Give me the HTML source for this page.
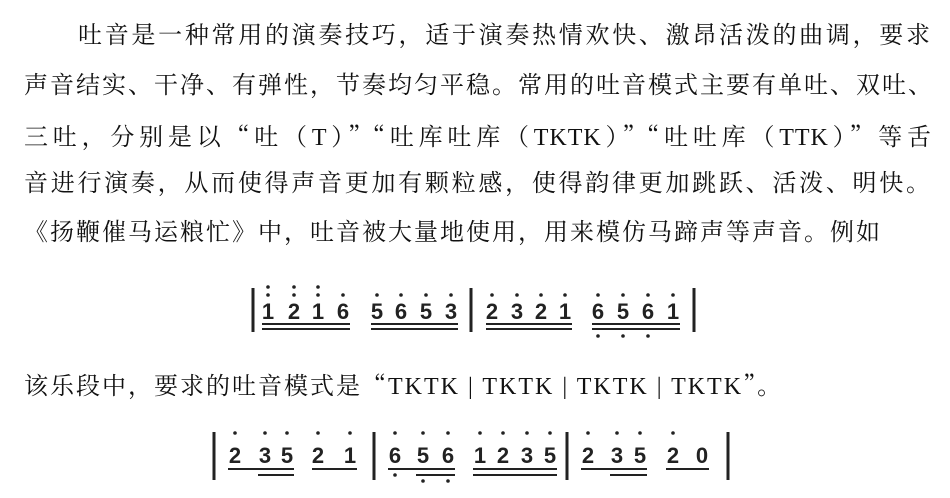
<!DOCTYPE html>
<html><head><meta charset="utf-8"><style>
body{margin:0;width:950px;height:498px;background:#fff;overflow:hidden;position:relative;font-family:"Liberation Serif","Noto Serif CJK SC",serif;color:#111}
.l{position:absolute;left:24px;width:908px;font-size:24px;line-height:30px;letter-spacing:2px;white-space:nowrap;text-align:justify;text-align-last:justify}
.n{text-align-last:auto}
.q{font-family:"Noto Serif CJK SC",serif}
svg{position:absolute;left:0;top:0}
svg text{font-family:"Liberation Sans",sans-serif;font-weight:bold;font-size:22px;text-anchor:middle}
</style></head><body>
<div class="l" style="top:21px;left:78px;width:854px">吐音是一种常用的演奏技巧，适于演奏热情欢快、激昂活泼的曲调，要求</div>
<div class="l" style="top:71px">声音结实、干净、有弹性，节奏均匀平稳。常用的吐音模式主要有单吐、双吐、</div>
<div class="l" style="top:120px;letter-spacing:1px">三吐，分别是以<span class="q">“</span>吐（T）<span class="q">”“</span>吐库吐库（TKTK）<span class="q">”“</span>吐吐库（TTK）<span class="q">”</span>等舌</div>
<div class="l" style="top:169px">音进行演奏，从而使得声音更加有颗粒感，使得韵律更加跳跃、活泼、明快。</div>
<div class="l n" style="top:218px">《扬鞭催马运粮忙》中，吐音被大量地使用，用来模仿马蹄声等声音。例如</div>
<div class="l n" style="top:369px">该乐段中，要求的吐音模式是<span class="q">“</span>TKTK | TKTK | TKTK | TKTK<span class="q">”</span>。</div>
<svg width="950" height="498" stroke="#222" fill="#222">
<g stroke-width="3"><line x1="253" y1="288" x2="253" y2="332"/><line x1="471" y1="288" x2="471" y2="332"/><line x1="694" y1="288" x2="694" y2="332"/></g>
<g stroke="none">
<text x="268" y="319">1</text><text x="294" y="319">2</text><text x="318" y="319">1</text><text x="343" y="319">6</text>
<text x="377" y="319">5</text><text x="401" y="319">6</text><text x="426" y="319">5</text><text x="451" y="319">3</text>
<text x="492" y="319">2</text><text x="517" y="319">3</text><text x="541" y="319">2</text><text x="565" y="319">1</text>
<text x="598" y="319">6</text><text x="623" y="319">5</text><text x="648" y="319">6</text><text x="673" y="319">1</text>
<g>
<circle cx="268" cy="287" r="1.8"/><circle cx="294" cy="287" r="1.8"/><circle cx="318" cy="287" r="1.8"/>
<circle cx="268" cy="295" r="1.8"/><circle cx="294" cy="295" r="1.8"/><circle cx="318" cy="295" r="1.8"/><circle cx="343" cy="295" r="1.8"/>
<circle cx="377" cy="295" r="1.8"/><circle cx="401" cy="295" r="1.8"/><circle cx="426" cy="295" r="1.8"/><circle cx="451" cy="295" r="1.8"/>
<circle cx="492" cy="295" r="1.8"/><circle cx="517" cy="295" r="1.8"/><circle cx="541" cy="295" r="1.8"/><circle cx="565" cy="295" r="1.8"/>
<circle cx="598" cy="295" r="1.8"/><circle cx="623" cy="295" r="1.8"/><circle cx="648" cy="295" r="1.8"/><circle cx="673" cy="295" r="1.8"/>
<circle cx="598" cy="336" r="1.8"/><circle cx="623" cy="336" r="1.8"/><circle cx="648" cy="336" r="1.8"/>
</g></g>
<g stroke-width="2">
<line x1="262" y1="324" x2="350" y2="324"/><line x1="262" y1="329" x2="350" y2="329"/>
<line x1="371" y1="324" x2="458" y2="324"/><line x1="371" y1="329" x2="458" y2="329"/>
<line x1="486" y1="324" x2="572" y2="324"/><line x1="486" y1="329" x2="572" y2="329"/>
<line x1="592" y1="324" x2="680" y2="324"/><line x1="592" y1="329" x2="680" y2="329"/>
</g>
<g stroke-width="3"><line x1="214" y1="432" x2="214" y2="480"/><line x1="374" y1="432" x2="374" y2="480"/><line x1="567" y1="432" x2="567" y2="480"/><line x1="728" y1="432" x2="728" y2="480"/></g>
<g stroke="none">
<text x="235" y="463">2</text><text x="265" y="463">3</text><text x="287" y="463">5</text><text x="318" y="463">2</text><text x="350" y="463">1</text>
<text x="395" y="463">6</text><text x="423" y="463">5</text><text x="448" y="463">6</text>
<text x="480" y="463">1</text><text x="503" y="463">2</text><text x="527" y="463">3</text><text x="550" y="463">5</text>
<text x="588" y="463">2</text><text x="617" y="463">3</text><text x="640" y="463">5</text><text x="673" y="463">2</text><text x="702" y="463">0</text>
<g>
<circle cx="235" cy="433" r="1.8"/><circle cx="265" cy="433" r="1.8"/><circle cx="287" cy="433" r="1.8"/><circle cx="318" cy="433" r="1.8"/><circle cx="350" cy="433" r="1.8"/>
<circle cx="395" cy="433" r="1.8"/><circle cx="423" cy="433" r="1.8"/><circle cx="448" cy="433" r="1.8"/>
<circle cx="480" cy="433" r="1.8"/><circle cx="503" cy="433" r="1.8"/><circle cx="527" cy="433" r="1.8"/><circle cx="550" cy="433" r="1.8"/>
<circle cx="588" cy="433" r="1.8"/><circle cx="617" cy="433" r="1.8"/><circle cx="640" cy="433" r="1.8"/><circle cx="673" cy="433" r="1.8"/>
<circle cx="395" cy="475" r="1.8"/><circle cx="423" cy="481" r="1.8"/><circle cx="448" cy="481" r="1.8"/>
</g></g>
<g stroke-width="2">
<line x1="228" y1="469" x2="294" y2="469"/><line x1="258" y1="475" x2="294" y2="475"/>
<line x1="312" y1="469" x2="357" y2="469"/>
<line x1="388" y1="469" x2="455" y2="469"/><line x1="416" y1="475" x2="455" y2="475"/>
<line x1="473" y1="469" x2="557" y2="469"/><line x1="473" y1="475" x2="557" y2="475"/>
<line x1="581" y1="469" x2="647" y2="469"/><line x1="610" y1="475" x2="647" y2="475"/>
<line x1="666" y1="469" x2="709" y2="469"/>
</g>
</svg>
</body></html>
